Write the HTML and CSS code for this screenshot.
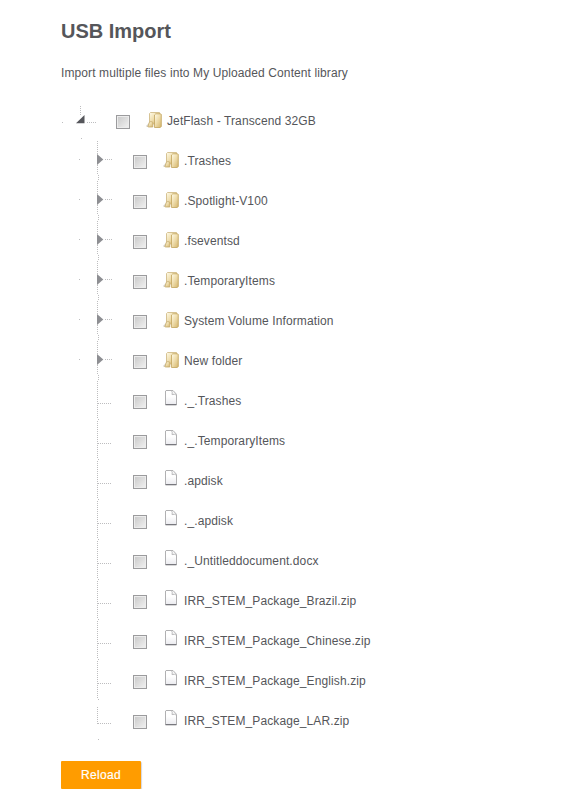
FILE: index.html
```html
<!DOCTYPE html>
<html lang="en">
<head>
<meta charset="utf-8">
<title>USB Import</title>
<link rel="stylesheet" href="styles.css">
</head>
<body>
<svg class="defs" aria-hidden="true">
  <defs>
    <linearGradient id="gold" x1="0" y1="0" x2="1" y2="1">
      <stop offset="0" stop-color="#fffbe8"/><stop offset=".45" stop-color="#f0dfb0"/><stop offset="1" stop-color="#d3b46a"/>
    </linearGradient>
    <linearGradient id="paper" x1="0" y1="0" x2="0" y2="1">
      <stop offset=".4" stop-color="#fff"/><stop offset="1" stop-color="#e9e9ee"/>
    </linearGradient>
    <symbol id="folder" viewBox="0 0 16 17">
      <path d="M0 14L3 11V15H1Z" fill="#d6d4ce"/>
      <path d="M3.5 1.5L4.5 .5H13.5V12H3.5Z" fill="url(#gold)" stroke="#cdb57d" stroke-width=".8"/>
      <path d="M8.5 3L9.8 1.8H14.3Q15.3 1.8 15.3 2.6V14.3L14.3 15.5H8.5Z" fill="url(#gold)" stroke="#c2a35c" stroke-width=".8"/>
      <path d="M2 14.5L3.3 10.3Q4.7 8.8 6.8 10.2V15H2.2Z" fill="url(#gold)" stroke="#c5a96a" stroke-width=".8"/>
    </symbol>
    <symbol id="file" viewBox="0 0 12 16">
      <path d="M1 .5H8L11.5 4.3V15H.5V1Z" fill="url(#paper)" stroke="#b0b0b2" stroke-width="1"/>
      <path d="M6.5 .8Q7.7 1.6 7 4.6Q9.8 3.9 11.3 5" fill="#f2f2f2" stroke="#b8b8ba" stroke-width=".9"/>
      <path d="M.7 14.5H11.3" stroke="#77777d" stroke-width="1"/>
    </symbol>
    <symbol id="root-line" viewBox="0 0 56 40">
      <path class="dots" d="M19.5 6V15M1 22.5H2M26 22.5H35M20.5 38V41"/>
      <path d="M15 23.3L23.5 15V23.3Z" fill="#55565b"/>
    </symbol>
    <symbol id="folder-line" viewBox="0 0 56 40">
      <path class="dots" d="M36.5 1V34M37.5 35V40M18 19.5H19M44 19.5H51"/>
      <path d="M36 14L42.3 19.5L36 25Z" fill="#8e8f93"/>
    </symbol>
    <symbol id="file-line" viewBox="0 0 56 40">
      <path class="dots" d="M36.5 1V38M37.5 39V40M37 23.5H51"/>
    </symbol>
    <symbol id="last-line" viewBox="0 0 56 40">
      <path class="dots" d="M36.5 7V24M37 23.5H51M37.5 39V40"/>
    </symbol>
  </defs>
</svg>
<main class="page">
  <h1 class="title">USB Import</h1>
  <p class="intro">Import multiple files into My Uploaded Content library</p>
  <ul class="tree">
    <li class="row root"><svg class="line"><use href="#root-line"/></svg><span class="check"></span><svg class="folder"><use href="#folder"/></svg><span class="name">JetFlash - Transcend 32GB</span></li>
    <li class="row"><svg class="line"><use href="#folder-line"/></svg><span class="check"></span><svg class="folder"><use href="#folder"/></svg><span class="name">.Trashes</span></li>
    <li class="row"><svg class="line"><use href="#folder-line"/></svg><span class="check"></span><svg class="folder"><use href="#folder"/></svg><span class="name">.Spotlight-V100</span></li>
    <li class="row"><svg class="line"><use href="#folder-line"/></svg><span class="check"></span><svg class="folder"><use href="#folder"/></svg><span class="name">.fseventsd</span></li>
    <li class="row"><svg class="line"><use href="#folder-line"/></svg><span class="check"></span><svg class="folder"><use href="#folder"/></svg><span class="name">.TemporaryItems</span></li>
    <li class="row"><svg class="line"><use href="#folder-line"/></svg><span class="check"></span><svg class="folder"><use href="#folder"/></svg><span class="name">System Volume Information</span></li>
    <li class="row"><svg class="line"><use href="#folder-line"/></svg><span class="check"></span><svg class="folder"><use href="#folder"/></svg><span class="name">New folder</span></li>
    <li class="row"><svg class="line"><use href="#file-line"/></svg><span class="check"></span><svg class="file"><use href="#file"/></svg><span class="name">._.Trashes</span></li>
    <li class="row"><svg class="line"><use href="#file-line"/></svg><span class="check"></span><svg class="file"><use href="#file"/></svg><span class="name">._.TemporaryItems</span></li>
    <li class="row"><svg class="line"><use href="#file-line"/></svg><span class="check"></span><svg class="file"><use href="#file"/></svg><span class="name">.apdisk</span></li>
    <li class="row"><svg class="line"><use href="#file-line"/></svg><span class="check"></span><svg class="file"><use href="#file"/></svg><span class="name">._.apdisk</span></li>
    <li class="row"><svg class="line"><use href="#file-line"/></svg><span class="check"></span><svg class="file"><use href="#file"/></svg><span class="name">._Untitleddocument.docx</span></li>
    <li class="row"><svg class="line"><use href="#file-line"/></svg><span class="check"></span><svg class="file"><use href="#file"/></svg><span class="name">IRR_STEM_Package_Brazil.zip</span></li>
    <li class="row"><svg class="line"><use href="#file-line"/></svg><span class="check"></span><svg class="file"><use href="#file"/></svg><span class="name">IRR_STEM_Package_Chinese.zip</span></li>
    <li class="row"><svg class="line"><use href="#file-line"/></svg><span class="check"></span><svg class="file"><use href="#file"/></svg><span class="name">IRR_STEM_Package_English.zip</span></li>
    <li class="row"><svg class="line"><use href="#last-line"/></svg><span class="check"></span><svg class="file"><use href="#file"/></svg><span class="name">IRR_STEM_Package_LAR.zip</span></li>
  </ul>
  <button class="reload" type="button">Reload</button>
</main>
</body>
</html>
```
FILE: styles.css
```css
* { box-sizing: border-box; }
body {
  margin: 0;
  background: #fff;
  color: #55565a;
  font: 12px/20px "Liberation Sans", Arial, sans-serif;
}
.defs { display: block; width: 0; height: 0; }
.page { padding: 19px 0 0 61px; }
.title { margin: 0; font-size: 20px; line-height: 24px; font-weight: bold; }
.intro { margin: 20px 0 17px; letter-spacing: .1px; }
.tree { margin: 0; padding: 0; list-style: none; }
.row { display: flex; align-items: flex-start; height: 40px; }
.line { flex: none; width: 56px; height: 40px; margin-right: 16px; }
.dots { fill: none; stroke: #bdbdbf; stroke-width: 1; stroke-dasharray: 1 1; }
.check {
  flex: none;
  width: 14px;
  height: 14px;
  margin: 15px 16px 0 0;
  border: 1px solid #9b9b9d;
  background: linear-gradient(135deg, #c8c8c8, #f2f2f2);
  box-shadow: inset 0 0 0 1px #ececec;
}
.folder { flex: none; width: 16px; height: 17px; margin: 12px 5px 0 0; }
.file { flex: none; width: 12px; height: 16px; margin: 10px 7px 0 2px; }
.root .line { margin-right: -1px; }
.name { padding-top: 11px; white-space: nowrap; letter-spacing: .11px; }
.reload {
  display: block;
  width: 80px;
  height: 28px;
  margin-top: 21px;
  padding: 0;
  border: 0;
  border-radius: 1px;
  background: #ff9c00;
  color: #fff;
  font: 12px/28px "Liberation Sans", Arial, sans-serif;
  letter-spacing: .3px;
  -webkit-text-stroke: .2px #fff;
  box-shadow: 1px 1px 1px #d5d5dc;
}
```
